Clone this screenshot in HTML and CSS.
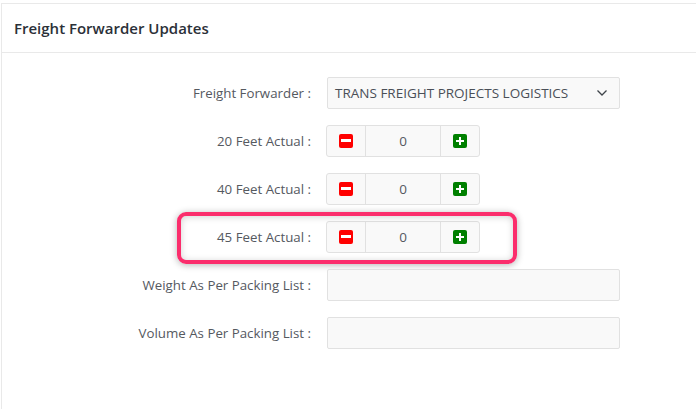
FILE: index.html

```html
<!DOCTYPE html>
<html lang="en">

<head>
    <meta charset="UTF-8">
    <meta name="viewport" content="width=device-width, initial-scale=1.0">
    <title>Freight Forwarder Updates</title>
    <link rel="stylesheet" href="styles.css">
</head>

<body>
    <div class="card">
        <div class="card-header">Freight Forwarder Updates</div>
        <div class="card-body">
            <div class="form-row">
                <label class="form-label">Freight Forwarder :</label>
                <div class="select-box">
                    <span>TRANS FREIGHT PROJECTS LOGISTICS</span>
                    <svg class="chevron" width="12" height="8" viewBox="0 0 12 8">
                        <path d="M1.500 1.500 6 6l4.500-4.500" fill="none" stroke="#3f444a" stroke-width="1.300" />
                    </svg>
                </div>
            </div>

            <div class="form-row">
                <label class="form-label">20 Feet Actual :</label>
                <div class="stepper">
                    <span class="step-btn"><span class="icon minus"></span></span>
                    <span class="step-value">0</span>
                    <span class="step-btn"><span class="icon plus"></span></span>
                </div>
            </div>

            <div class="form-row">
                <label class="form-label">40 Feet Actual :</label>
                <div class="stepper">
                    <span class="step-btn"><span class="icon minus"></span></span>
                    <span class="step-value">0</span>
                    <span class="step-btn"><span class="icon plus"></span></span>
                </div>
            </div>

            <div class="form-row highlighted">
                <label class="form-label">45 Feet Actual :</label>
                <div class="stepper">
                    <span class="step-btn"><span class="icon minus"></span></span>
                    <span class="step-value">0</span>
                    <span class="step-btn"><span class="icon plus"></span></span>
                </div>
            </div>

            <div class="form-row">
                <label class="form-label">Weight As Per Packing List :</label>
                <div class="text-box"></div>
            </div>

            <div class="form-row">
                <label class="form-label">Volume As Per Packing List :</label>
                <div class="text-box"></div>
            </div>
        </div>
    </div>
</body>

</html>
```

FILE: styles.css

```css
*,
*::before,
*::after {
    box-sizing: border-box;
}

body {
    margin: 0;
    height: 409px;
    overflow: hidden;
    background-color: #fff;
    font-family: "Open Sans", "Noto Sans", sans-serif;
    color: #55595f;
}

.card {
    margin: 3px 0 0 1px;
    height: 406px;
    border: 1px solid #e9e9e9;
    border-right: none;
    border-bottom: none;
}

.card-header {
    height: 49px;
    padding-left: 12px;
    display: flex;
    align-items: center;
    border-bottom: 1px solid #e9e9e9;
    font-size: 15px;
    font-weight: 600;
    color: #2b3038;
}

.card-body {
    padding-top: 24px;
    display: flex;
    flex-direction: column;
    row-gap: 16px;
}

.form-row {
    position: relative;
    display: flex;
    align-items: center;
    height: 32px;
}

.form-label {
    width: 309px;
    text-align: right;
    font-size: 13.3px;
}

.select-box {
    width: 293px;
    height: 32px;
    margin-left: 16px;
    padding: 0 11px 0 7px;
    display: flex;
    align-items: center;
    justify-content: space-between;
    background-color: #f9f9f9;
    border: 1px solid #e1e1e1;
    border-radius: 2px;
    font-size: 13.5px;
    color: #4a4f57;
}

.text-box {
    width: 293px;
    height: 32px;
    margin-left: 16px;
    background-color: #f9f9f9;
    border: 1px solid #e1e1e1;
    border-radius: 2px;
}

.stepper {
    width: 154px;
    height: 32px;
    margin-left: 15px;
    display: flex;
    background-color: #f9f9f9;
    border: 1px solid #e1e1e1;
    border-radius: 3px;
}

.step-btn {
    width: 38px;
    display: flex;
    align-items: center;
    justify-content: center;
}

.step-value {
    flex: 1;
    display: flex;
    align-items: center;
    justify-content: center;
    border-left: 1px solid #e1e1e1;
    border-right: 1px solid #e1e1e1;
    font-size: 13.5px;
}

.icon {
    position: relative;
    width: 14px;
    height: 14px;
    border-radius: 2px;
}

.minus {
    background-color: #ff0000;
}

.plus {
    background-color: #008000;
}

.icon::before,
.plus::after {
    content: "";
    position: absolute;
    left: 2px;
    top: 5px;
    width: 10px;
    height: 3px;
    background-color: #fff;
}

.plus::before {
    left: 3px;
    top: 6px;
    width: 8px;
    height: 2px;
}

.plus::after {
    left: 6px;
    top: 3px;
    width: 2px;
    height: 8px;
}

/* annotation drawn on the screenshot */
.highlighted::after {
    content: "";
    position: absolute;
    left: 175px;
    top: -9px;
    width: 340px;
    height: 52px;
    border: 4px solid #fb2d6c;
    border-radius: 9px;
    box-shadow: 0 1px 7px rgba(0, 0, 0, 0.3), inset 0 1px 7px rgba(0, 0, 0, 0.18);
    pointer-events: none;
}
```
